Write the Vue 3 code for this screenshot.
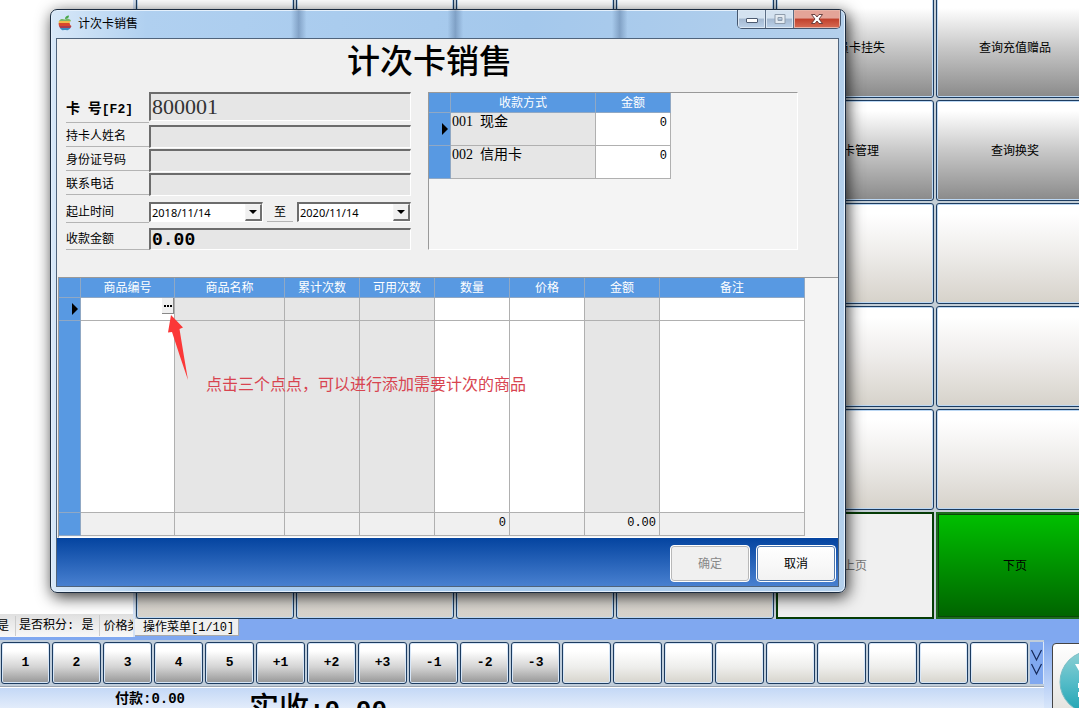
<template>
  <div class="desktop">
    <div class="workspace">
      <div class="side">
        <div class="status">
          <span>是</span>
          <span>是否积分<i class="num">: </i>是</span>
          <span>价格类</span>
        </div>
      </div>
      <div class="menu-area">
        <div class="menu-grid">
          <button
            v-for="(item, i) in menuItems"
            :key="i"
            class="menu-btn"
            :class="item.type"
            :disabled="item.type === 'prev'"
          >{{ item.label }}</button>
        </div>
        <div class="tab-bar">
          <button class="tab">操作菜单<span class="num">[1/10]</span></button>
        </div>
      </div>
    </div>

    <div class="bottom">
      <div class="bottom-main">
        <div class="key-bar">
          <button
            v-for="(k, i) in keys"
            :key="i"
            class="key"
            :class="{ empty: !k, wide: i === keys.length - 1 }"
          >{{ k }}</button>
          <button class="key-more" aria-label="更多">
            <svg width="13" height="30" viewBox="0 0 13 30">
              <path d="M1.500 2l5 10 5-10M1.500 16l5 10 5-10" fill="none" stroke="#14285a" stroke-width="1.200" />
            </svg>
          </button>
        </div>
        <div class="pay-bar">
          <span class="paid">付款<b class="num">:0.00</b></span>
          <span class="received">实收<span class="num">:0.00</span></span>
        </div>
      </div>
      <div class="bottom-side">
        <button class="pay-card" aria-label="收款">
          <svg width="70" height="70" viewBox="0 0 70 70">
            <defs>
              <linearGradient id="teal" x1="0" y1="0" x2="0" y2="1">
                <stop offset="0" stop-color="#8fd0d4" />
                <stop offset="0.5" stop-color="#55bcc8" />
                <stop offset="1" stop-color="#1fa3b2" />
              </linearGradient>
            </defs>
            <circle cx="38" cy="34" r="31" fill="url(#teal)" stroke="#78bcc4" />
            <path d="M22 16h7l9 15 9-15h7l-11 19h8v5h-10v4h10v5h-10v8h-6v-8h-10v-5h10v-4h-10v-5h8z" fill="#fff" />
          </svg>
        </button>
      </div>
    </div>

    <!-- 计次卡销售窗口 -->
    <div class="window">
      <div class="title-bar">
        <svg class="logo" width="14" height="16" viewBox="0 0 14 16">
          <path d="M7 4C7 2 8.500 0.500 11 0.500C11 3 9.500 4 7 4Z" fill="#4aa84a" />
          <clipPath id="apple">
            <path d="M7 4.500C5 3.500 2 3.500 1 6C0 9 1 13 4 15C5 15.500 6 15 7 15C8 15 9 15.500 10 15C12 14 13 12.500 13.500 11C11.500 10 11 7.500 13 5.500C11.500 3.500 9 3.500 7 4.500Z" />
          </clipPath>
          <g clip-path="url(#apple)">
            <rect width="14" height="7" fill="#7cb868" />
            <rect y="6" width="14" height="2" fill="#f0bc4c" />
            <rect y="8" width="14" height="3" fill="#d8482c" />
            <rect y="11" width="14" height="2" fill="#a83c50" />
            <rect y="13" width="14" height="3" fill="#3c8cc0" />
          </g>
        </svg>
        <span class="title-text">计次卡销售</span>
        <div class="win-controls">
          <button class="win-btn min" aria-label="最小化">
            <svg width="14" height="10" viewBox="0 0 14 10">
              <rect x="1.500" y="4.500" width="11" height="4" rx="0.500" fill="#fff" stroke="#4c5a70" />
            </svg>
          </button>
          <button class="win-btn max" aria-label="最大化" disabled>
            <svg width="12" height="10" viewBox="0 0 12 10">
              <path d="M1 0.500h10v9H1zM4 3.500h4v3H4z" fill="#e4ebf2" fill-rule="evenodd" stroke="#8e9cac" />
            </svg>
          </button>
          <button class="win-btn close" aria-label="关闭">
            <svg width="12" height="10" viewBox="0 0 12 10">
              <path d="M0.500 0.500h3.500l2 2.500 2-2.500h3.500l-3.500 4.500 3.500 4.500h-3.500l-2-2.500-2 2.500H0.500l3.500-4.500z" fill="#fff" stroke="#5c3434" stroke-width="0.900" />
            </svg>
          </button>
        </div>
      </div>

      <div class="client">
        <h1>计次卡销售</h1>

        <div class="top-row">
          <form class="form" @submit.prevent>
            <div class="field card-no">
              <label for="cardNo">卡&nbsp; 号<span class="num">[F2]</span></label>
              <input id="cardNo" v-model="form.cardNo" readonly />
            </div>
            <div class="field">
              <label for="holder">持卡人姓名</label>
              <input id="holder" v-model="form.holder" readonly />
            </div>
            <div class="field">
              <label for="idNo">身份证号码</label>
              <input id="idNo" v-model="form.idNo" readonly />
            </div>
            <div class="field">
              <label for="phone">联系电话</label>
              <input id="phone" v-model="form.phone" readonly />
            </div>
            <div class="field dates">
              <label for="startDate">起止时间</label>
              <div class="date">
                <select id="startDate" v-model="form.start">
                  <option>2018/11/14</option>
                </select>
                <span class="drop"><svg width="8" height="4" viewBox="0 0 8 4"><path d="M0 0h8L4 4z" /></svg></span>
              </div>
              <label class="to" for="endDate">至</label>
              <div class="date">
                <select id="endDate" v-model="form.end">
                  <option>2020/11/14</option>
                </select>
                <span class="drop"><svg width="8" height="4" viewBox="0 0 8 4"><path d="M0 0h8L4 4z" /></svg></span>
              </div>
            </div>
            <div class="field amount">
              <label for="amount">收款金额</label>
              <input id="amount" v-model="form.amount" readonly />
            </div>
          </form>

          <div class="pay-panel">
            <table class="grid pay-table">
              <colgroup>
                <col class="w-mark" />
                <col class="w-remark" />
                <col class="w-num" />
              </colgroup>
              <thead>
                <tr>
                  <th></th>
                  <th>收款方式</th>
                  <th>金额</th>
                </tr>
              </thead>
              <tbody>
                <tr v-for="(p, i) in payments" :key="p.code">
                  <td class="mark">
                    <svg v-if="i === 0" width="6" height="12" viewBox="0 0 6 12"><path d="M0 0l6 6-6 6z" /></svg>
                  </td>
                  <td class="grey"><span class="pay-name"><span>{{ p.code }}</span><span>{{ p.name }}</span></span></td>
                  <td class="right num">{{ p.amount }}</td>
                </tr>
              </tbody>
            </table>
          </div>
        </div>

        <div class="goods-panel">
          <table class="grid goods-table">
            <colgroup>
              <col class="w-mark" />
              <col v-for="c in columns" :key="c.key" :class="c.width" />
            </colgroup>
            <thead>
              <tr>
                <th></th>
                <th v-for="c in columns" :key="c.key">{{ c.label }}</th>
              </tr>
            </thead>
            <tbody>
              <tr class="current">
                <td class="mark">
                  <svg width="6" height="12" viewBox="0 0 6 12"><path d="M0 0l6 6-6 6z" /></svg>
                </td>
                <td v-for="c in columns" :key="c.key" :class="{ grey: c.grey }">
                  <button v-if="c.key === 'code'" class="dots" aria-label="选择商品">
                    <svg width="8" height="2" viewBox="0 0 8 2"><path d="M0 0h2v2H0zM3 0h2v2H3zM6 0h2v2H6z" /></svg>
                  </button>
                </td>
              </tr>
              <tr class="blank">
                <td class="mark"></td>
                <td v-for="c in columns" :key="c.key" :class="{ grey: c.grey }"></td>
              </tr>
            </tbody>
            <tfoot>
              <tr>
                <td class="mark"></td>
                <td v-for="c in columns" :key="c.key" class="right num">{{ c.total }}</td>
              </tr>
            </tfoot>
          </table>

          <svg class="arrow" width="22" height="66" viewBox="0 0 22 66">
            <path d="M4 0L16 12.500L12.500 14Q17 42 21 65Q13 42 5 17L1 17.500Z" fill="#fb3838" />
          </svg>
          <p class="hint">点击三个点点，可以进行添加需要计次的商品</p>
        </div>

        <div class="footer">
          <button class="btn" disabled>确定</button>
          <button class="btn">取消</button>
        </div>
      </div>
    </div>
  </div>
</template>

<script setup>
import { reactive } from 'vue'

const form = reactive({
  cardNo: '800001',
  holder: '',
  idNo: '',
  phone: '',
  start: '2018/11/14',
  end: '2020/11/14',
  amount: '0.00'
})

const payments = [
  { code: '001', name: '现金', amount: 0 },
  { code: '002', name: '信用卡', amount: 0 }
]

const columns = [
  { key: 'code', label: '商品编号', width: 'w-code' },
  { key: 'name', label: '商品名称', width: 'w-name', grey: true },
  { key: 'total', label: '累计次数', width: 'w-num', grey: true },
  { key: 'usable', label: '可用次数', width: 'w-num', grey: true },
  { key: 'qty', label: '数量', width: 'w-num', total: '0' },
  { key: 'price', label: '价格', width: 'w-num' },
  { key: 'sum', label: '金额', width: 'w-num', grey: true, total: '0.00' },
  { key: 'remark', label: '备注', width: 'w-remark' }
]

const keys = ['1', '2', '3', '4', '5', '+1', '+2', '+3', '-1', '-2', '-3', '', '', '', '', '', '', '', '', '']

// 6 列 x 6 行的操作菜单
const labels = {
  4: '会员卡挂失',
  5: '查询充值赠品',
  10: '次卡管理',
  11: '查询换奖',
  34: '上页',
  35: '下页'
}
const menuItems = Array.from({ length: 36 }, (_, i) => {
  let type = labels[i] ? 'filled' : 'plain'
  if (i === 34) type = 'prev'
  if (i === 35) type = 'next'
  return { label: labels[i] || '', type }
})
</script>

<style>
body {
  margin: 0;
  overflow: hidden;
}
</style>

<style scoped>
.desktop {
  position: relative;
  height: 100vh;
  overflow: hidden;
  display: flex;
  flex-direction: column;
  background: #80a8f0;
  font-family: "Liberation Sans", "Noto Sans CJK SC", sans-serif;
  font-size: 12px;
  line-height: 16px;
  color: #000;
}
.desktop * {
  box-sizing: border-box;
}
button,
input,
select {
  font: inherit;
  color: inherit;
  margin: 0;
  padding: 0;
}
svg {
  display: block;
}
.num {
  font-family: "Liberation Mono", "Noto Sans CJK SC", monospace;
}

/* 背景操作区 */
.workspace {
  display: flex;
  flex: none;
}
.side {
  width: 135px;
  background: #fff;
  display: flex;
  flex-direction: column;
  justify-content: flex-end;
  overflow: hidden;
  border-right: 2px solid #d4e2f6;
}
.status {
  display: flex;
  height: 23px;
  align-items: center;
  white-space: nowrap;
  background: linear-gradient(#e0e0e0, #f8f8f8);
}
.status span {
  padding: 0 6px 0 3px;
  line-height: 20px;
  border-right: 1px solid #ccc;
}
.status span:first-child {
  margin-left: -6px;
}
.status span:last-child {
  border-right: 0;
}
.status i {
  font-style: normal;
  white-space: pre;
}
.menu-area {
  flex: 1;
  min-width: 0;
}
.menu-grid {
  display: grid;
  grid-template-columns: repeat(6, 1fr);
  grid-template-rows: repeat(5, 101px) 107px;
  gap: 2px;
  margin: -3px -15px 0 0;
  padding-left: 1px;
  background: #c4ced6;
}
.menu-btn {
  border: 1px solid #1d3c60;
  border-radius: 3px;
  box-shadow: inset 0 0 0 1px #bcd8f4;
  background: linear-gradient(#fff 10%, #eeecea 50%, #d6d2ca);
}
.menu-btn.filled {
  background: linear-gradient(#fff 10%, #c8c8c8 50%, #8a8a8a);
}
.menu-btn.prev {
  background: #f0f0f0;
  border: 2px solid #063c06;
  border-radius: 0;
  box-shadow: none;
  color: #777;
}
.menu-btn.next {
  background: linear-gradient(#00c000, #006400);
  border: 2px solid #1d6c1d;
  border-radius: 0;
  box-shadow: inset 0 0 0 1px #0a480a;
}
.tab-bar {
  height: 18px;
}
.tab {
  display: block;
  height: 17px;
  padding: 0 4px 0 8px;
  border: 0;
  border-right: 1px solid #aaa;
  border-bottom: 1px solid #aaa;
  background: #f0f0f0;
}

/* 底部快捷键 */
.bottom {
  display: flex;
  flex: 1;
  min-height: 0;
  margin-top: 3px;
}
.bottom-main {
  flex: 1;
  min-width: 0;
}
.key-bar {
  display: flex;
  gap: 2px;
  padding: 2px 0 2px 1px;
  background: #c0cdda;
  border-bottom: 1px solid #9aa4b0;
}
.key {
  flex: 49 1 0;
  height: 42px;
  border: 1px solid #1d3c60;
  border-radius: 3px;
  box-shadow: inset 0 0 0 1px #d6e6f8;
  background: linear-gradient(#fff 20%, #d4d4d4 60%, #969696);
  font-family: "Liberation Mono", monospace;
  font-size: 13px;
  font-weight: 700;
}
.key.empty {
  background: linear-gradient(#fff 20%, #eeeeec 60%, #d6d4cc);
}
.key.wide {
  flex-grow: 58;
}
.key-more {
  flex: none;
  width: 14px;
  border: 0;
  border-right: 1px solid #dce8fa;
  background: #80a8f0;
}
.pay-bar {
  display: flex;
  align-items: flex-start;
  height: 40px;
  gap: 64px;
  padding-left: 115px;
  border-top: 1px solid #fff;
  background: linear-gradient(#c4d8f6, #fff);
}
.paid {
  font-size: 14px;
  font-weight: 700;
  line-height: 20px;
}
.received {
  font-size: 30px;
  font-weight: 500;
  line-height: 40px;
}
.received .num {
  font-size: 26px;
  font-weight: 700;
}
.bottom-side {
  flex: none;
  width: 35px;
  padding: 3px 0 0 8px;
  background: linear-gradient(#80a8f0, #d8e6fa);
}
.pay-card {
  width: 80px;
  height: 80px;
  border: 1px solid #444;
  border-radius: 4px;
  background: linear-gradient(#fff, #e0dfda);
}

/* 窗口 */
.window {
  position: absolute;
  top: 9px;
  left: 50px;
  right: 233px;
  padding: 0 6px 5px 5px;
  border: 1px solid #1c2c40;
  border-radius: 7px;
  background: linear-gradient(90deg, #d8e8f8, #b0d0f0 12%, #a4c8ec 60%, #b4d0ec);
  box-shadow: inset 0 0 0 1px #e4f0fc, 2px 4px 16px rgba(0, 0, 0, 0.8);
}
.title-bar {
  display: flex;
  align-items: flex-start;
  height: 28px;
  padding-left: 2px;
  background:
    linear-gradient(90deg, transparent 30%, rgba(70, 100, 140, 0.4) 31%, transparent 32%),
    linear-gradient(90deg, transparent 50%, rgba(70, 100, 140, 0.4) 51%, transparent 52%),
    linear-gradient(90deg, transparent 71%, rgba(70, 100, 140, 0.4) 72%, transparent 73%);
}
.logo {
  margin: 5px 6px 0 0;
}
.title-text {
  flex: 1;
  line-height: 28px;
}
.win-controls {
  display: flex;
  margin-right: -2px;
  border: 1px solid #44566e;
  border-top: 0;
  border-radius: 0 0 5px 5px;
  overflow: hidden;
}
.win-btn {
  display: flex;
  align-items: center;
  justify-content: center;
  width: 28px;
  height: 18px;
  border: 0;
  border-right: 1px solid #5c6e86;
  background: linear-gradient(#d4e2f0 45%, #a4b8d0 50%, #bcd2ea);
  box-shadow: inset 0 0 0 1px #dce8f4;
}
.win-btn.close {
  width: 46px;
  border-right: 0;
  background: linear-gradient(#e4a498 45%, #c0402c 50%, #d86c54);
  box-shadow: inset 0 0 0 1px #e8b4a8;
}
.client {
  border: 1px solid #50647c;
  background: #f0f0f0;
}
h1 {
  margin: 0;
  padding-right: 36px;
  font-size: 33px;
  font-weight: 500;
  line-height: 46px;
  text-align: center;
}
.top-row {
  display: flex;
  gap: 17px;
  padding: 7px 40px 27px 9px;
}

/* 表单 */
.form {
  flex: none;
  width: 345px;
}
.field {
  display: flex;
  height: 23px;
  margin-bottom: 1px;
}
.field label {
  flex: none;
  width: 83px;
  height: 22px;
  line-height: 22px;
  border-bottom: 1px solid #b4b4b4;
}
.field input {
  flex: 1;
  min-width: 0;
  padding: 0 2px;
  border: 1px solid #fff;
  border-top: 2px solid #6c6c6c;
  border-left: 2px solid #6c6c6c;
  border-radius: 0;
  background: #e6e6e6;
  outline: none;
}
.field.card-no {
  height: 31px;
  margin-bottom: 2px;
}
.card-no label {
  height: 31px;
  line-height: 32px;
  font-size: 14px;
  font-weight: 700;
}
.card-no label .num {
  font-size: 13px;
}
.card-no input {
  height: 29px;
  padding: 0 1px;
  font-family: "Liberation Serif", serif;
  font-size: 22px;
  color: #333;
}
.field.dates {
  height: 26px;
  margin-bottom: 5px;
  align-items: flex-end;
}
.dates label {
  height: 25px;
  line-height: 28px;
}
.dates label.to {
  width: 26px;
  height: 22px;
  line-height: 24px;
  margin: 0 4px 1px;
  text-align: center;
}
.date {
  flex: 1;
  min-width: 0;
  display: flex;
  height: 20px;
  margin-bottom: 1px;
  border: 1px solid #fff;
  border-top: 2px solid #6c6c6c;
  border-left: 2px solid #6c6c6c;
  background: #fff;
}
.date select {
  flex: 1;
  min-width: 0;
  appearance: none;
  padding-left: 1px;
  border: 0;
  background: #fff;
  font-family: "Noto Sans", sans-serif;
  font-size: 11px;
  line-height: 16px;
  outline: none;
}
.drop {
  display: flex;
  align-items: center;
  justify-content: center;
  width: 17px;
  border: 1px solid #f4f4f4;
  border-right: 2px solid #707070;
  border-bottom: 2px solid #707070;
  background: #f0f0f0;
}
.field.amount {
  height: 22px;
  margin-bottom: 0;
}
.amount input {
  padding: 0 1px;
  font-family: "Liberation Mono", monospace;
  font-size: 18px;
  font-weight: 700;
}

/* 表格 */
.grid {
  table-layout: fixed;
  width: 0;
  border-collapse: separate;
  border-spacing: 0;
}
.w-mark {
  width: 22px;
}
.w-code {
  width: 94px;
}
.w-name {
  width: 110px;
}
.w-num {
  width: 75px;
}
.w-remark {
  width: 145px;
}
.grid th {
  height: 20px;
  padding: 0;
  line-height: 18px;
  font-weight: 400;
  color: #fff;
  background: #5899e2;
  border-right: 1px solid #90a8c4;
  border-bottom: 1px solid #90a8c4;
}
.grid td {
  padding: 0;
  background: #fff;
  vertical-align: top;
  border-right: 1px solid #b0b0b0;
  border-bottom: 1px solid #b0b0b0;
}
.grid td.grey {
  background: #e6e6e6;
}
.grid td.mark {
  background: #5899e2;
  border-color: #90a8c4;
  vertical-align: middle;
}
.mark svg {
  margin-left: auto;
  margin-right: 2px;
}
.grid td.right {
  padding-right: 3px;
  line-height: 20px;
  text-align: right;
}
.pay-panel {
  flex: 1;
  min-width: 0;
  border: 1px solid #fff;
  border-top-color: #999;
  border-left-color: #999;
  background: #f4f4f4;
}
.pay-table td {
  height: 33px;
  line-height: 18px;
}
.pay-name {
  display: flex;
  gap: 7px;
  padding-left: 1px;
  font-family: "Liberation Serif", "Noto Sans CJK SC", serif;
  font-size: 14px;
}
.goods-panel {
  position: relative;
  margin-left: 1px;
  border-top: 1px solid #999;
  border-bottom: 1px solid #fff;
  border-left: 1px solid #999;
  padding-bottom: 1px;
  background: #f4f4f4;
}
.current td {
  height: 23px;
}
.blank td {
  height: 192px;
}
.goods-table tfoot td {
  height: 23px;
  background: #f0f0f0;
}
.goods-table tfoot td.mark {
  background: #5899e2;
}
.dots {
  display: flex;
  align-items: center;
  justify-content: center;
  width: 12px;
  height: 16px;
  margin-left: auto;
  border: 0;
  border-right: 1px solid #888;
  border-bottom: 1px solid #888;
  background: #f0f0f0;
}
.arrow {
  position: absolute;
  left: 108px;
  top: 37px;
}
.hint {
  position: absolute;
  left: 147px;
  top: 95px;
  margin: 0;
  font-size: 16px;
  line-height: 24px;
  white-space: nowrap;
  color: #d84450;
}
.footer {
  display: flex;
  justify-content: flex-end;
  gap: 6px;
  padding: 7px 2px 4px;
  background: linear-gradient(#0444a0, #4880d0);
}
.btn {
  width: 80px;
  height: 37px;
  border: 1px solid #fff;
  border-radius: 4px;
  box-shadow: inset 0 0 0 1px #5078ac;
  background: linear-gradient(#fff, #f2f2f2);
}
.btn:disabled {
  color: #888;
  background: #f0f0f0;
  box-shadow: inset 0 0 0 1px #b8b8b8;
}
</style>
